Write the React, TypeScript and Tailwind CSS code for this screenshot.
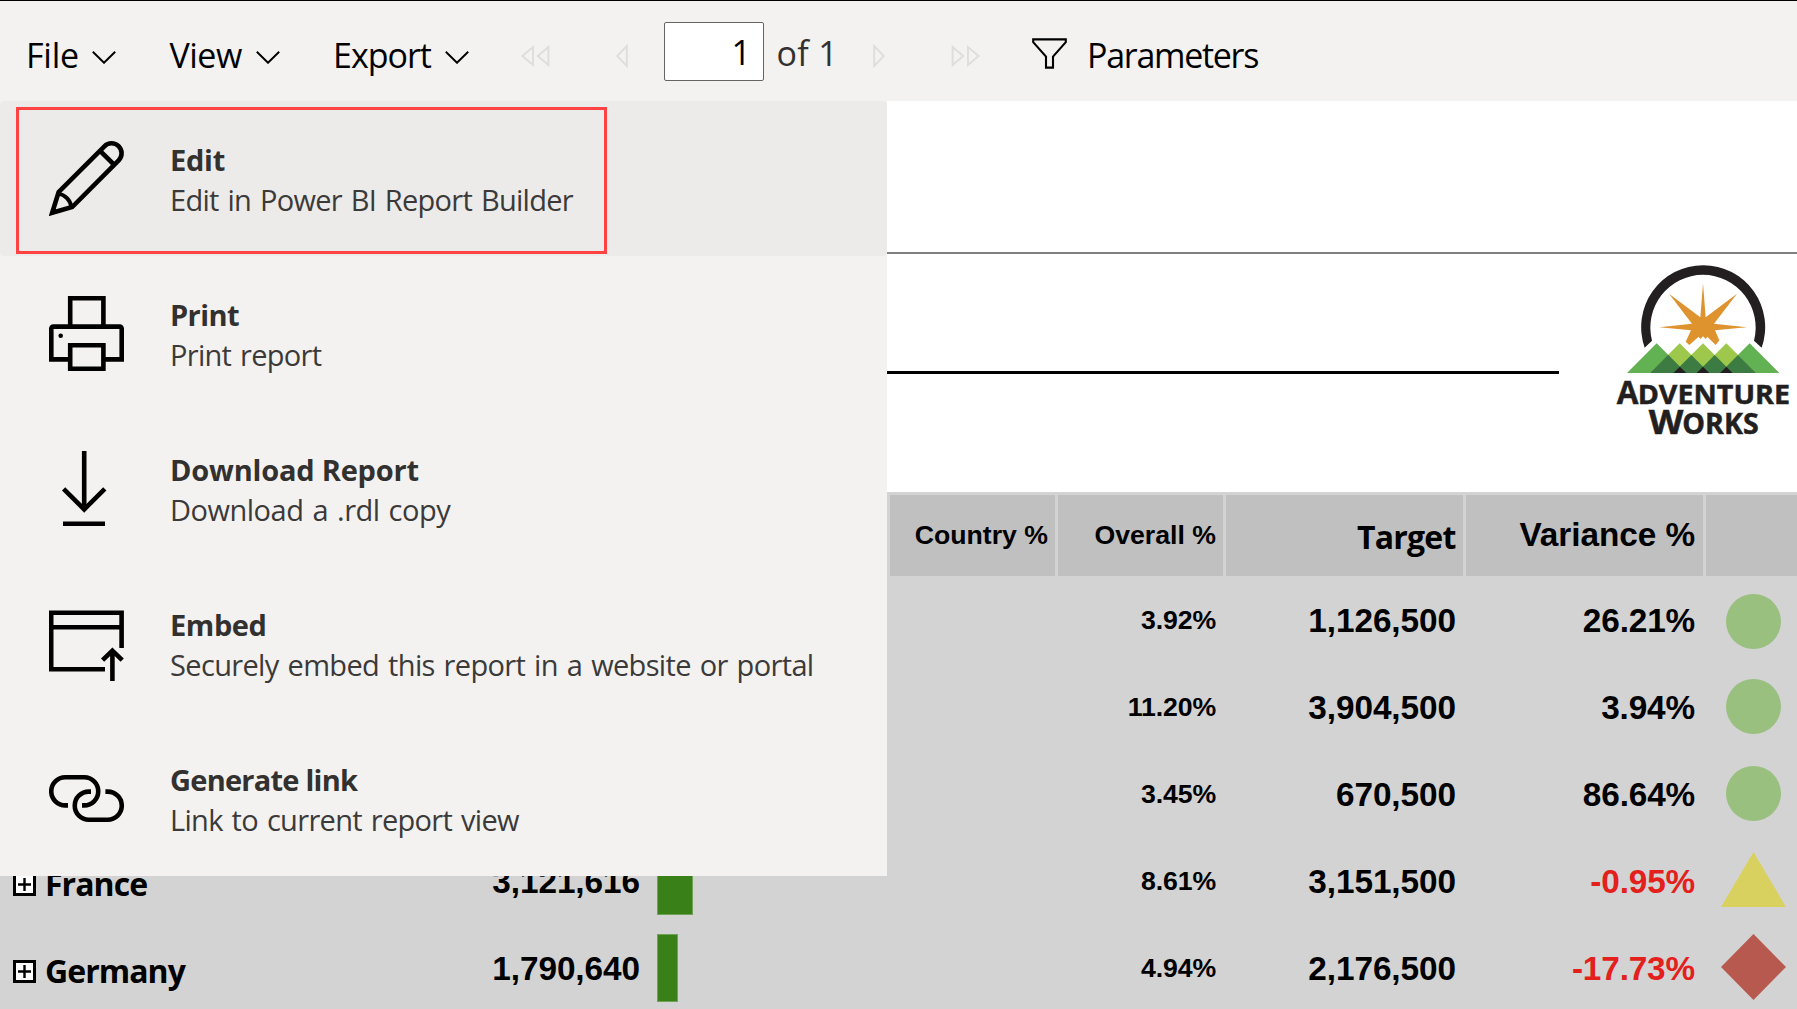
import type { ReactNode } from "react";

const UI = "font-['Open_Sans','Noto_Sans',sans-serif]";
const REPORT = "font-['Liberation_Sans',Arial,sans-serif]";

function Chevron() {
  return (
    <svg className="mt-3 shrink-0" width="24" height="13" viewBox="0 0 24 13" fill="none" stroke="#000" strokeWidth="1.9">
      <path d="M0.8 0.8 L12 11.8 L23.2 0.8" />
    </svg>
  );
}

function DoubleTriangle({ flip = false }: { flip?: boolean }) {
  return (
    <svg
      className={flip ? "mt-2.5 shrink-0 -scale-x-100" : "mt-2.5 shrink-0"}
      width="29"
      height="22"
      viewBox="0 0 29 22"
      fill="none"
      stroke="#dedddb"
      strokeWidth="1.9"
    >
      <path d="M12 2 V20 L1.4 11 Z M27.4 2 V20 L16.8 11 Z" />
    </svg>
  );
}

function SingleTriangle({ flip = false }: { flip?: boolean }) {
  return (
    <svg
      className={flip ? "mt-2.5 shrink-0 -scale-x-100" : "mt-2.5 shrink-0"}
      width="12"
      height="24"
      viewBox="0 0 12 24"
      fill="none"
      stroke="#dedddb"
      strokeWidth="1.9"
    >
      <path d="M10.8 2 V22 L1.2 12 Z" />
    </svg>
  );
}

function FilterIcon() {
  return (
    <svg className="mt-[5px] shrink-0" width="35" height="31" viewBox="0 0 35 31" fill="none" stroke="#000" strokeWidth="2.1">
      <path d="M1.2 1.4 H33.8 V4.2 L21 18.6 V29.6 H14 V18.6 L1.2 4.2 Z" />
    </svg>
  );
}

function MenuIcon({ children }: { children: ReactNode }) {
  return (
    <svg className="mt-10 shrink-0" width="75" height="75" viewBox="0 0 75 75" fill="none" stroke="#000" strokeWidth="4.6">
      {children}
    </svg>
  );
}

const icons = {
  edit: (
    <MenuIcon>
      <path d="M9.6 51.200 L55.400 5.300 A10 10 0 0 1 69.700 19.400 L23.200 66 L3.200 71.800 Z" />
      <path d="M50.800 9.600 L65.400 24" />
      <path d="M9.200 52.600 A16 16 0 0 1 22.400 66" strokeWidth="4" />
    </MenuIcon>
  ),
  print: (
    <MenuIcon>
      <path d="M21.2 30 V2.3 H54.4 V30" />
      <path d="M19 63.4 H2.3 V32.6 A2 2 0 0 1 4.3 30.6 H70.7 A2 2 0 0 1 72.7 32.6 V63.4 H56" />
      <path d="M21.2 49.3 H54.4 V72.7 H21.2 Z" />
      <circle cx="11.7" cy="39.8" r="2.3" fill="#000" stroke="none" />
    </MenuIcon>
  ),
  download: (
    <MenuIcon>
      <path d="M35.2 0 V59" />
      <path d="M14.6 37.8 L35.2 58.4 L55.8 37.8" />
      <path d="M14 72.7 H56" />
    </MenuIcon>
  ),
  embed: (
    <MenuIcon>
      <path d="M56 63.3 H2.2 V6.8 H72.6 V42" />
      <path d="M2.2 21.2 H72.6" />
      <path d="M63.4 75 V45" />
      <path d="M53.6 54.2 L63.4 44.6 L73.2 54.2" />
    </MenuIcon>
  ),
  link: (
    <MenuIcon>
      <path d="M19 44.4 H16.3 A14.05 14.05 0 0 1 16.3 16.3 H35.2 A14.05 14.05 0 0 1 35.2 44.4 H33" />
      <path d="M42 30.6 H39.8 A14.05 14.05 0 0 0 39.8 58.7 H58.7 A14.05 14.05 0 0 0 58.7 30.6 H56.4" />
    </MenuIcon>
  ),
};

const menu = [
  { icon: icons.edit, title: "Edit", sub: "Edit in Power BI Report Builder", t: "tracking-[-0.27px]", s: "tracking-[-0.72px]" },
  { icon: icons.print, title: "Print", sub: "Print report", t: "tracking-[-0.6px]", s: "tracking-[-0.7px]" },
  { icon: icons.download, title: "Download Report", sub: "Download a .rdl copy", t: "tracking-[-0.2px]", s: "tracking-[-0.5px]" },
  { icon: icons.embed, title: "Embed", sub: "Securely embed this report in a website or portal", t: "tracking-[-0.4px]", s: "tracking-[-0.65px]" },
  { icon: icons.link, title: "Generate link", sub: "Link to current report view", t: "tracking-[-0.75px]", s: "tracking-[-0.68px]" },
];

function FileMenu() {
  return (
    <div className={`absolute left-0 top-[101px] z-10 w-[887px] bg-[#f3f2f1] text-[29px] leading-10 text-[#323130] ${UI}`}>
      {menu.map((m, i) => (
        <div key={m.title} className={`flex h-[155px] pl-[49px] ${i === 0 ? "rounded bg-[#ecebe9]" : ""}`}>
          {m.icon}
          <div className="ml-[46px] pt-[39px] whitespace-nowrap">
            <div className={`font-bold ${m.t}`}>{m.title}</div>
            <div className={`text-[#3b3a39] [word-spacing:2px] ${m.s}`}>{m.sub}</div>
          </div>
        </div>
      ))}
      <div className="absolute left-4 top-1.5 h-[147px] w-[591px] border-[3px] border-[#ff4343]" />
    </div>
  );
}

function Toolbar() {
  return (
    <header className={`flex h-[101px] shrink-0 items-center border-t border-black bg-[#f3f2f1] pl-[26px] text-[34px] leading-none whitespace-nowrap text-black ${UI}`}>
      <span className="mt-2 w-[66px] tracking-[-0.2px]">File</span>
      <Chevron />
      <span className="mt-2 ml-[53.5px] w-[86.5px] tracking-[-0.5px]">View</span>
      <Chevron />
      <span className="mt-2 ml-[53px] w-[111.5px] tracking-[-1px]">Export</span>
      <Chevron />
      <span className="ml-[52px] flex"><DoubleTriangle /></span>
      <span className="ml-[66.5px] flex"><SingleTriangle /></span>
      <span className="mt-px ml-[36px] flex h-[59px] w-[100px] items-center justify-end rounded-[2px] border border-[#666463] bg-white pr-[12px]">
        1
      </span>
      <span className="mt-[3px] ml-[12.6px] w-[96px] tracking-[0.3px] text-[#323130]">of 1</span>
      <SingleTriangle flip />
      <span className="ml-[66px] flex"><DoubleTriangle flip /></span>
      <span className="ml-[52.5px] flex"><FilterIcon /></span>
      <span className="mt-2 ml-[20px] tracking-[-1.3px]">Parameters</span>
    </header>
  );
}

function Logo() {
  return (
    <svg width="197" height="200" viewBox="0 39 591 600">
      <path d="M134 323 A186 186 0 1 1 485 323 L462 302 A158 158 0 1 0 156 302 Z" fill="#231f20" />
      <path
        d="M309 130 L317 232 L411 161 L342 251 L440 262 L345 271 L358 301 L347 315 L322 290 L317 297 L309 289 L301 297 L296 290 L268 315 L257 305 L273 271 L178 262 L276 251 L207 161 L301 232 Z"
        fill="#df932f"
      />
      <path d="M170 310 L259 399 H81 Z M449 310 L538 399 H360 Z" fill="#62b152" />
      <path d="M239 310 L328 399 H150 Z M309 310 L398 399 H220 Z M379 310 L468 399 H290 Z" fill="#9dc84b" />
      <path
        d="M204.5 344.5 L259 399 H150 Z M274 345 L328 399 H220 Z M344 345 L398 399 H290 Z M414 345 L468 399 H360 Z"
        fill="#3c7c42"
      />
      <path d="M239.5 380 L259 399 H220 Z M309 380 L328 399 H290 Z M379 380 L398 399 H360 Z" fill="#231f20" />
      <g fill="#231f20" stroke="#231f20" strokeWidth="1.5" fontFamily="'Open Sans','Noto Sans',sans-serif" fontWeight="700">
        <text x="50" y="492" fontSize="98" textLength="65" lengthAdjust="spacingAndGlyphs">A</text>
        <text x="113" y="492" fontSize="81" textLength="457" lengthAdjust="spacingAndGlyphs">DVENTURE</text>
        <text x="146" y="581" fontSize="101" textLength="104" lengthAdjust="spacingAndGlyphs">W</text>
        <text x="247" y="581" fontSize="84" textLength="229" lengthAdjust="spacingAndGlyphs">ORKS</text>
      </g>
    </svg>
  );
}

const COLS = "grid grid-cols-[400px_239px_251px_168px_168px_240px_240px_91px]";

type Row = {
  name?: string;
  sales?: string;
  bar?: number;
  overall: string;
  target: string;
  variance: string;
  mark: ReactNode;
};

const circle = "ml-[20px] size-[54.5px] rounded-full bg-[#9ac07f]";

const rows: Row[] = [
  { overall: "3.92%", target: "1,126,500", variance: "26.21%", mark: <div className={`mt-[17px] ${circle}`} /> },
  { overall: "11.20%", target: "3,904,500", variance: "3.94%", mark: <div className={`mt-[15px] ${circle}`} /> },
  { overall: "3.45%", target: "670,500", variance: "86.64%", mark: <div className={`mt-[15px] ${circle}`} /> },
  {
    name: "France",
    sales: "3,121,616",
    bar: 35.5,
    overall: "8.61%",
    target: "3,151,500",
    variance: "-0.95%",
    mark: (
      <svg className="mt-3.5 ml-[15px]" width="65" height="55" viewBox="0 0 65 55">
        <path d="M32.5 0 L65 55 H0 Z" fill="#d9d15f" />
      </svg>
    ),
  },
  {
    name: "Germany",
    sales: "1,790,640",
    bar: 20.5,
    overall: "4.94%",
    target: "2,176,500",
    variance: "-17.73%",
    mark: (
      <svg className="mt-[9px] ml-[15px]" width="65" height="66" viewBox="0 0 65 66">
        <path d="M32.5 0 L65 33 L32.5 66 L0 33 Z" fill="#b8594f" />
      </svg>
    ),
  },
];

function Expand() {
  return (
    <svg className="mt-1.5 shrink-0" width="23" height="23" viewBox="0 0 23 23">
      <rect x="1.5" y="1.5" width="20" height="20" fill="#fff" stroke="#000" strokeWidth="3" />
      <path d="M5 11.5 H18 M11.5 5 V18" stroke="#000" strokeWidth="2.4" />
    </svg>
  );
}

function ReportTable() {
  const cell = "mr-[3px] flex items-center justify-end bg-[#c0c0c0]";
  return (
    <div className={`grow bg-[#d3d3d3] pt-[3px] text-[33.33px] font-bold text-black ${REPORT}`}>
      <div className={`h-[81px] ${COLS}`}>
        <div className={cell} />
        <div className={cell} />
        <div className={cell} />
        <div className={`${cell} pr-[7px] pb-0.5 text-[26.67px]`}>Country %</div>
        <div className={`${cell} pr-[7px] pb-0.5 text-[26.67px]`}>Overall %</div>
        <div className={`${cell} pt-0.5 pr-[7.5px] text-[32px] tracking-[-0.8px] ${UI}`}>Target</div>
        <div className={`${cell} pr-2 pb-0.5 tracking-[-0.05px]`}>Variance %</div>
        <div className="bg-[#c0c0c0]" />
      </div>
      <div className="pt-px">
        {rows.map((r) => (
          <div key={r.overall} className={`h-[87px] items-center ${COLS}`}>
            <div className="flex items-center pl-[13px]">
              {r.name && (
                <>
                  <Expand />
                  <span className={`mt-1 ml-[9px] text-[32px] leading-none tracking-[-0.95px] ${UI}`}>{r.name}</span>
                </>
              )}
            </div>
            <div className="-mr-px text-right tracking-[-0.06px]">{r.sales}</div>
            <div className="pl-[18px]">
              {r.bar && <div className="mb-0.5 h-[68px] border border-[#6da356] bg-[#3a8018]" style={{ width: r.bar }} />}
            </div>
            <div />
            <div className="pr-[10px] pb-0.5 text-right text-[26.67px] tracking-[-0.1px]">{r.overall}</div>
            <div className="pr-[10px] text-right tracking-[-0.06px]">{r.target}</div>
            <div className={`pr-[11px] text-right tracking-[-0.15px] ${r.variance.startsWith("-") ? "text-[#e3201b]" : ""}`}>
              {r.variance}
            </div>
            <div className="self-start">{r.mark}</div>
          </div>
        ))}
      </div>
    </div>
  );
}

export default function App() {
  return (
    <div className="relative flex h-[1009px] w-[1797px] flex-col overflow-hidden bg-white">
      <Toolbar />
      <FileMenu />
      <div className="h-[151px] shrink-0" />
      <div className="flex h-[240px] shrink-0 items-start justify-between border-t-2 border-[#808080]">
        <div className="mt-[117px] h-[3px] w-[1559px] bg-black" />
        <div className="-mt-px"><Logo /></div>
      </div>
      <ReportTable />
    </div>
  );
}
